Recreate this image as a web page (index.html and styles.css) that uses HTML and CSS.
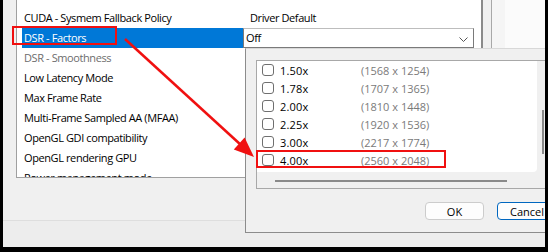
FILE: index.html
```html
<!DOCTYPE html>
<html lang="en">
<head>
    <meta charset="UTF-8">
    <title>DSR - Factors</title>
    <link rel="stylesheet" href="styles.css">
</head>
<body>

    <div class="frame">
        <div class="screen">
            <div class="settings">
                <div class="setting-list">
                    <div class="setting">
                        <span class="setting-name">CUDA - Sysmem Fallback Policy</span>
                        <span class="setting-value">Driver Default</span>
                    </div>
                    <div class="setting selected">
                        <span class="setting-name">DSR - Factors</span>
                        <span class="setting-value combo">
                            Off
                            <svg class="chevron" width="9" height="5" viewBox="0 0 9 5"><path d="M0.5 0.5 L4.5 4.5 L8.5 0.5" fill="none" stroke="#555" stroke-width="1"/></svg>
                        </span>
                    </div>
                    <div class="setting disabled">
                        <span class="setting-name">DSR - Smoothness</span>
                    </div>
                    <div class="setting"><span class="setting-name">Low Latency Mode</span></div>
                    <div class="setting"><span class="setting-name">Max Frame Rate</span></div>
                    <div class="setting"><span class="setting-name">Multi-Frame Sampled AA (MFAA)</span></div>
                    <div class="setting"><span class="setting-name">OpenGL GDI compatibility</span></div>
                    <div class="setting"><span class="setting-name">OpenGL rendering GPU</span></div>
                    <div class="setting"><span class="setting-name">Power management mode</span></div>
                </div>
                <div class="list-side"></div>
            </div>
            <div class="status-band"></div>

            <div class="popup">
                <div class="factor-box">
                    <div class="factor-view">
                        <div class="factor-list">
                            <div class="factor"><span class="check"></span><span class="factor-scale">1.50x</span><span class="factor-res">(1568 x 1254)</span></div>
                            <div class="factor"><span class="check"></span><span class="factor-scale">1.78x</span><span class="factor-res">(1707 x 1365)</span></div>
                            <div class="factor"><span class="check"></span><span class="factor-scale">2.00x</span><span class="factor-res">(1810 x 1448)</span></div>
                            <div class="factor"><span class="check"></span><span class="factor-scale">2.25x</span><span class="factor-res">(1920 x 1536)</span></div>
                            <div class="factor"><span class="check"></span><span class="factor-scale">3.00x</span><span class="factor-res">(2217 x 1774)</span></div>
                            <div class="factor"><span class="check"></span><span class="factor-scale">4.00x</span><span class="factor-res">(2560 x 2048)</span></div>
                        </div>
                        <div class="v-scroll"><div class="v-thumb"></div></div>
                    </div>
                    <div class="h-scroll"><div class="h-thumb"></div></div>
                </div>
                <div class="buttons">
                    <button class="btn">OK</button>
                    <button class="btn btn-default">Cancel</button>
                </div>
            </div>
        </div>

        <!-- annotations -->
        <div class="mark mark-dsr"></div>
        <div class="mark mark-4x"></div>
        <svg class="arrow" width="548" height="252" viewBox="0 0 548 252">
            <line x1="125" y1="39" x2="241" y2="145" stroke="#f01010" stroke-width="2.5"/>
            <polygon points="254,157 233.8,149.4 244.6,137.6" fill="#f01010"/>
        </svg>
    </div>

</body>
</html>
```

FILE: styles.css
```css
body {
    margin: 0;
    font-family: "Open Sans", "Noto Sans", Arial, sans-serif;
    font-size: 11px;
    color: #000;
}
.frame {
    position: relative;
    width: 548px;
    height: 252px;
    background-color: #000;
    overflow: hidden;
}
.screen {
    position: relative;
    margin: 0 3px 0 3px;
    height: 247px;
    background-color: #f0f0f0;
    overflow: hidden;
}
.settings {
    display: flex;
    height: 178px;
    margin-left: 13px;
}
.setting-list {
    width: 467px;
    padding-top: 8px;
    background-color: #fff;
    border-left: 1px solid #a0a0a0;
    border-bottom: 1px solid #a0a0a0;
    border-right: 2px solid #8a8a8a;
    box-sizing: border-box;
    overflow: hidden;
    letter-spacing: -0.4px;
}
.list-side {
    flex: 1;
    margin-left: 8px;
    border-left: 1px solid #a8a8a8;
    background: linear-gradient(to right, #f5f5f5 13px, #fbfbfb 13px);
}
.setting {
    display: grid;
    grid-template-columns: 221px 231px;
    height: 20px;
    margin-left: 5px;
    line-height: 20px;
}
.setting-name {
    padding-left: 2px;
    white-space: nowrap;
}
.setting.selected .setting-name {
    background-color: #0078d7;
    color: #fff;
}
.setting.disabled .setting-name {
    color: #6d6d6d;
}
.setting-value {
    padding-left: 7px;
    white-space: nowrap;
}
.combo {
    position: relative;
    padding-left: 2px;
    border: 1px solid #7a7a7a;
    border-top-color: #bdbdbd;
    line-height: 18px;
    box-sizing: border-box;
    background-color: #fff;
}
.chevron {
    position: absolute;
    right: 5px;
    top: 8px;
}
.status-band {
    height: 27px;
    margin-top: 42px;
    border-top: 1px solid #dedede;
    background-color: #ededed;
}

/* open DSR factors dropdown */
.popup {
    position: absolute;
    left: 242px;
    top: 48px;
    width: 320px;
    height: 185px;
    padding: 11px 0 0 10px;
    box-sizing: border-box;
    background-color: #f0f0f0;
    border: 1px solid #8c8c8c;
    border-top-color: #d8d8d8;
}
.factor-box {
    height: 129px;
    border: 1px solid #a8a8a8;
    box-sizing: border-box;
    display: flex;
    flex-direction: column;
}
.factor-view {
    display: flex;
    height: 111px;
}
.factor-list {
    width: 280px;
    background-color: #fff;
    border-bottom-right-radius: 4px;
}
.v-scroll {
    position: relative;
    flex: 1;
}
.v-thumb {
    position: absolute;
    left: 5px;
    top: 49px;
    width: 2px;
    height: 44px;
    background-color: #8a8a8a;
}
.h-scroll {
    flex: 1;
    padding: 8px 0 0 18px;
}
.h-thumb {
    width: 232px;
    height: 2px;
    background-color: #8a8a8a;
}
.factor {
    display: flex;
    align-items: center;
    height: 18px;
}
.check {
    width: 10px;
    height: 10px;
    margin-left: 5px;
    border: 1px solid #6f6f6f;
    border-radius: 3px;
    background-color: #fff;
}
.factor-scale {
    width: 81px;
    padding-left: 6px;
    letter-spacing: 0.2px;
}
.factor-res {
    color: #7a7a7a;
}
.buttons {
    display: flex;
    gap: 13px;
    margin: 13px 0 0 169px;
}
.btn {
    width: 59px;
    height: 18px;
    padding: 0;
    font-family: inherit;
    font-size: 11px;
    color: #000;
    background-color: #fdfdfd;
    border: 1px solid #cccccc;
    border-radius: 4px;
}
.btn-default {
    width: 64px;
    padding-left: 12px;
    text-align: left;
    border-color: #0067c0;
}

/* annotations */
.mark {
    position: absolute;
    border: 2px solid #f01010;
}
.mark-dsr {
    left: 12px;
    top: 26px;
    width: 101px;
    height: 15px;
}
.mark-4x {
    left: 256px;
    top: 150px;
    width: 186px;
    height: 14px;
}
.arrow {
    position: absolute;
    left: 0;
    top: 0;
}
```
